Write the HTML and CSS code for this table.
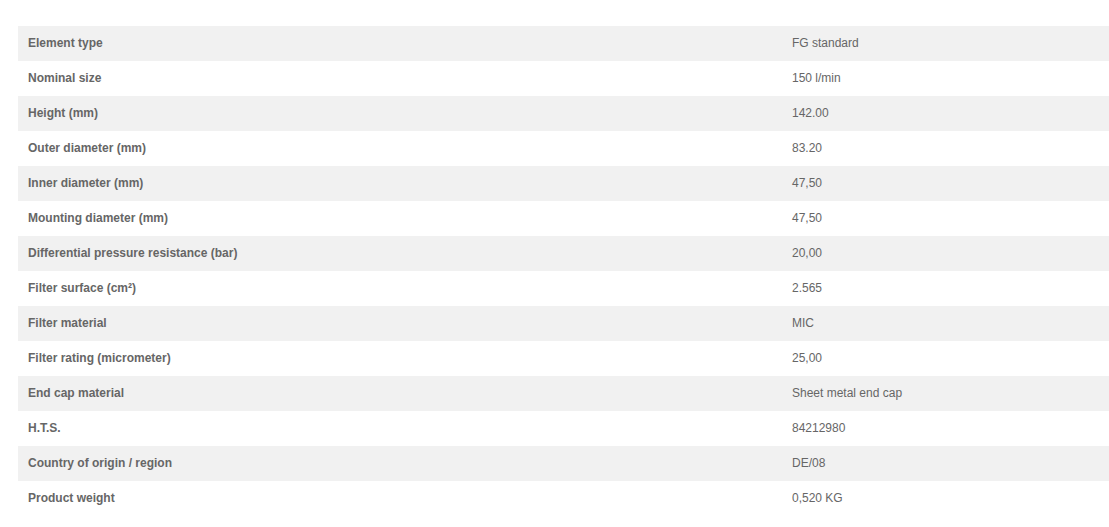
FILE: index.html
```html
<!DOCTYPE html>
<html>
<head>
<meta charset="utf-8">
<link rel="stylesheet" href="styles.css">
</head>
<body>
<div class="wrap">
<table class="specs">
<tbody>
<tr><th>Element type</th><td>FG standard</td></tr>
<tr><th>Nominal size</th><td>150 l/min</td></tr>
<tr><th>Height (mm)</th><td>142.00</td></tr>
<tr><th>Outer diameter (mm)</th><td>83.20</td></tr>
<tr><th>Inner diameter (mm)</th><td>47,50</td></tr>
<tr><th>Mounting diameter (mm)</th><td>47,50</td></tr>
<tr><th>Differential pressure resistance (bar)</th><td>20,00</td></tr>
<tr><th>Filter surface (cm²)</th><td>2.565</td></tr>
<tr><th>Filter material</th><td>MIC</td></tr>
<tr><th>Filter rating (micrometer)</th><td>25,00</td></tr>
<tr><th>End cap material</th><td>Sheet metal end cap</td></tr>
<tr><th>H.T.S.</th><td>84212980</td></tr>
<tr><th>Country of origin / region</th><td>DE/08</td></tr>
<tr><th>Product weight</th><td>0,520 KG</td></tr>
</tbody>
</table>
</div>
</body>
</html>
```
FILE: styles.css
```css
html, body {
  margin: 0;
  padding: 0;
  background: #fff;
  overflow: hidden;
}
.wrap {
  padding: 26px 0 0 18px;
}
.specs {
  width: 1091px;
  table-layout: fixed;
  border-collapse: collapse;
  font-family: "Liberation Sans", Arial, sans-serif;
  font-size: 12px;
  color: #666;
}
.specs tr {
  height: 35px;
}
.specs tr:nth-child(odd) {
  background: #f1f1f1;
}
.specs th,
.specs td {
  padding: 0 10px 2px 10px;
  height: 33px;
  text-align: left;
  vertical-align: middle;
}
.specs th {
  width: 744px;
  font-weight: bold;
}
.specs td {
  font-weight: normal;
}
```
